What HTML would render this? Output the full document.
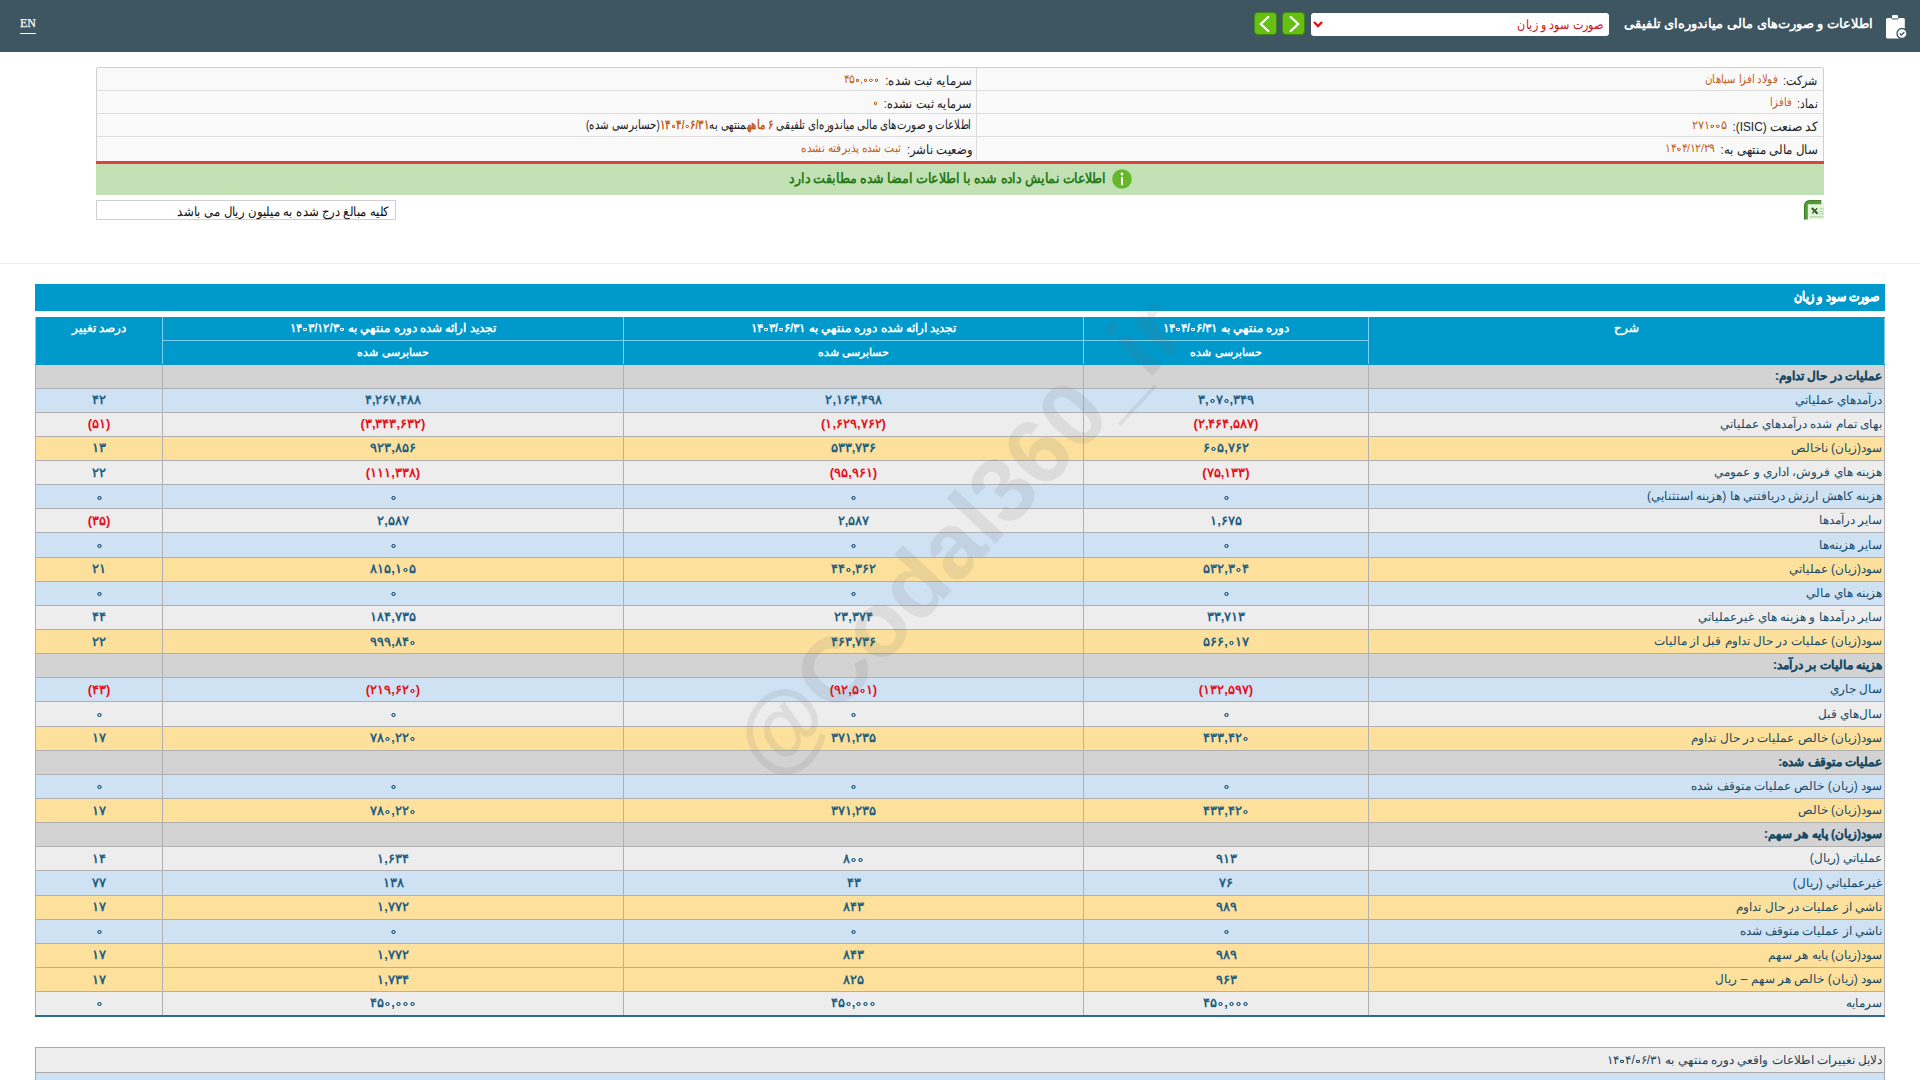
<!DOCTYPE html>
<html lang="fa">
<head>
<meta charset="utf-8">
<title>صورت سود و زیان</title>
<style>
*{box-sizing:border-box;margin:0;padding:0}
html,body{width:1920px;height:1080px;overflow:hidden;background:#fff;font-family:"Liberation Sans",sans-serif;color:#222}
.abs{position:absolute}
#hdr{position:absolute;left:0;top:0;width:1920px;height:52px;background:#3e5562}
#en{position:absolute;left:19.8px;top:15px;font-family:"Liberation Serif",serif;font-size:13px;font-weight:normal;color:#fff;line-height:16px;transform-origin:0 50%;transform:scaleX(0.92);-webkit-text-stroke:0.25px #fff}
#enline{position:absolute;left:20px;top:33px;width:16px;height:1px;background:#fff}
#ttl{position:absolute;right:47px;top:14px;font-size:13.3px;font-weight:bold;color:#fff;direction:rtl;white-space:nowrap;line-height:20px}
#sel{position:absolute;left:1311px;top:13px;width:298px;height:23px;background:#fff;border-radius:3px}
#seltxt{position:absolute;right:5.5px;top:3px;font-size:13px;transform-origin:100% 50%;transform:scaleX(0.86);color:#d0121b;direction:rtl;white-space:nowrap;line-height:17px}
.gbtn{position:absolute;top:12px;width:23px;height:23px;background:#66bf12;border-radius:4px;border:1px solid #3f8a10}
#info{position:absolute;left:96px;top:67px;width:1728px;height:94px;background:#f9f9f9;border:1px solid #cfcfcf;border-bottom:none;border-radius:3px 3px 0 0}
.irow{position:absolute;left:0;width:1726px;height:23px;border-top:1px solid #dcdcdc}
.icell{position:absolute;top:-0.5px;height:23px;direction:rtl;white-space:nowrap;font-size:12.5px;line-height:22px;padding-right:6px}
.ic1{left:880px;width:846px;padding-right:5.3px}
.ic2{left:0;width:880px;border-right:1px solid #dcdcdc;padding-right:4px}
.v{color:#c0601a;font-size:11.5px;vertical-align:2px}
.w{display:inline-block;transform-origin:100% 50%}
.l{margin-left:3px}
#redl{position:absolute;left:96px;top:161px;width:1728px;height:3px;background:#e2413f}
#green{position:absolute;left:96px;top:164px;width:1728px;height:31px;background:#c2e1b5}
#gtxt{position:absolute;right:718.4px;top:4px;text-align:right;direction:rtl;font-size:14px;font-weight:bold;color:#287a16;line-height:20px;white-space:nowrap}
#note{position:absolute;left:96px;top:200px;width:300px;height:20px;border:1px solid #cfcfcf;direction:rtl;font-size:13px;line-height:18px;padding-right:6px;padding-top:1.5px;white-space:nowrap;color:#111}
#sep{position:absolute;left:0;top:263px;width:1920px;height:1px;background:#ececec}
#tbar{position:absolute;left:35px;top:284px;width:1850px;height:27px;background:#0099cb;direction:rtl;color:#fff;font-weight:bold;font-size:13px;-webkit-text-stroke:0.4px #fff;line-height:25.5px;padding-right:5px;white-space:nowrap}
#tbl{position:absolute;left:35px;top:316.5px;width:1849px;border-collapse:collapse;table-layout:fixed;direction:rtl}
#tbl td,#tbl th{border:1px solid #b0b0b0;text-align:center;font-size:13px;font-weight:bold;color:#235e80;white-space:nowrap;overflow:hidden;padding:0}
#tbl thead th{background:#0099cb;color:#fff;border-color:#7fd0ee;height:23.5px;font-weight:bold;font-size:12px;vertical-align:middle}
#tbl thead tr+tr th{font-size:11.2px}
#tbl thead tr:first-child th{border-top-color:#0099cb}
#tbl thead tr+tr th,#tbl thead th[rowspan]{border-bottom-color:#0099cb}
#tbl thead th.top{vertical-align:top;padding-top:3px}
#tbl thead tr:first-child th{padding-bottom:2px}
#tbl tbody tr{height:24.15px}
#tbl tbody td{padding-bottom:1px}
#tbl tbody td.d{text-align:right;padding-right:2px;color:#174a66;font-size:12px;font-weight:normal}
#tbl tr.h td{background:#d3d3d3}
#tbl tr.h td.d{font-weight:bold;-webkit-text-stroke:0.2px #174a66}
#tbl tr.b td{background:#cfe2f4}
#tbl tr.g td{background:#ededed}
#tbl tr.y td{background:#fde09c}
#tbl td.r{color:#e3131b}
#tbl tbody tr:last-child td{border-bottom:2px solid #2d6a96}
#t2{position:absolute;left:35px;top:1047px;width:1850px;height:40px;border:1px solid #aaa;border-bottom:none}
#t2a{position:absolute;left:0;top:0;width:1848px;height:24px;background:#ededed;direction:rtl;font-size:12px;line-height:24px;padding-right:1.5px;color:#1c3f57;white-space:nowrap}
#t2b{position:absolute;left:0;top:24px;width:1848px;height:20px;background:#cfe2f4;border-top:1px solid #aaa}
.z{color:transparent;--zc:#235e80;background:radial-gradient(0.185em 0.16em at 50% 60%,transparent 30%,var(--zc) 52%,var(--zc) 78%,transparent 100%)}
td.r .z{--zc:#e3131b}
.v .z{--zc:#c0601a}
#tbl thead .z{--zc:#fff}
#t2a .z{--zc:#1c3f57}
#wm{position:absolute;left:958px;top:537px;transform:translate(-50%,-50%) rotate(-47deg);font-size:92px;font-weight:bold;color:rgba(110,110,110,0.13);line-height:100px;white-space:nowrap;pointer-events:none;font-family:"Liberation Sans",sans-serif}
</style>
</head>
<body>
<div id="hdr">
  <div id="en">EN</div><div id="enline"></div>
  <div class="gbtn" style="left:1254px"><svg width="21" height="21" viewBox="0 0 21 21" style="position:absolute;left:0;top:0"><path d="M13.3 4 L5.8 11 L13.3 18" fill="none" stroke="#fff" stroke-width="2.3" stroke-linecap="round"/></svg></div>
  <div class="gbtn" style="left:1282px"><svg width="21" height="21" viewBox="0 0 21 21" style="position:absolute;left:0;top:0"><path d="M7.7 4 L15.2 11 L7.7 18" fill="none" stroke="#fff" stroke-width="2.3" stroke-linecap="round"/></svg></div>
  <div id="sel"><svg width="10" height="8" viewBox="0 0 10 8" style="position:absolute;left:2.3px;top:6.8px"><path d="M1 2 L5 6 L9 2" fill="none" stroke="#e01010" stroke-width="2.4"/></svg><div id="seltxt">صورت سود و زیان</div></div>
  <div id="ttl">اطلاعات و صورت‌های مالی میاندوره‌ای تلفیقی</div>
  <svg width="24" height="26" viewBox="0 0 24 26" style="position:absolute;left:1884px;top:13px">
    <rect x="2" y="5" width="18.8" height="20.5" rx="1.5" fill="#fff"/>
    <rect x="7.5" y="1.5" width="7" height="4.5" rx="1.5" fill="#fff" stroke="#3e5562" stroke-width="1"/>
    <circle cx="18" cy="20.5" r="5" fill="#fff" stroke="#3e5562" stroke-width="1.3"/>
    <path d="M15.7 20.6 L17.4 22.1 L20.3 19.2" fill="none" stroke="#3e5562" stroke-width="1.4"/>
  </svg>
</div>

<div id="info">
  <div class="irow" style="top:0;border-top:none">
    <div class="icell ic1"><span class="w" style="transform:scaleX(0.8458)"><span class="l">شرکت:</span> <span class="v">فولاد افزا سپاهان</span></span></div>
    <div class="icell ic2"><span class="w" style="transform:scaleX(0.9021)"><span class="l">سرمایه ثبت شده:</span> <span class="v">۴۵<span class="z">۰</span>,<span class="z">۰</span><span class="z">۰</span><span class="z">۰</span></span></span></div>
  </div>
  <div class="irow" style="top:22px">
    <div class="icell ic1"><span class="w" style="transform:scaleX(0.8194)"><span class="l">نماد:</span> <span class="v">فافزا</span></span></div>
    <div class="icell ic2"><span class="w" style="transform:scaleX(0.8691)"><span class="l">سرمایه ثبت نشده:</span> <span class="v"><span class="z">۰</span></span></span></div>
  </div>
  <div class="irow" style="top:45px">
    <div class="icell ic1"><span class="w" style="transform:scaleX(0.9446)"><span class="l">کد صنعت (ISIC):</span> <span class="v">۲۷۱<span class="z">۰</span><span class="z">۰</span>۵</span></span></div>
    <div class="icell ic2"><span class="w" style="transform:scaleX(0.7858)">اطلاعات و صورت‌های مالی میاندوره‌ای تلفیقی <span class="v" style="vertical-align:0;font-weight:bold;font-size:12.5px">۶ ماهه</span>منتهی به<span class="v" style="vertical-align:0;font-weight:bold;font-size:12.5px">۱۴<span class="z">۰</span>۴/<span class="z">۰</span>۶/۳۱</span>(حسابرسی شده)</span></div>
  </div>
  <div class="irow" style="top:68px">
    <div class="icell ic1"><span class="w" style="transform:scaleX(0.9089)"><span class="l">سال مالی منتهی به:</span> <span class="v">۱۴<span class="z">۰</span>۴/۱۲/۲۹</span></span></div>
    <div class="icell ic2"><span class="w" style="transform:scaleX(0.893)"><span class="l">وضعیت ناشر:</span> <span class="v">ثبت شده پذیرفته نشده</span></span></div>
  </div>
</div>
<div id="redl"></div>
<div id="green"><svg width="20" height="20" viewBox="0 0 20 20" style="position:absolute;left:1015.5px;top:4.8px"><circle cx="10" cy="10" r="9.8" fill="#66b82a"/><circle cx="10" cy="5" r="1.4" fill="#fff"/><rect x="9" y="7.8" width="2" height="8.5" rx="0.5" fill="#fff"/></svg><div id="gtxt"><span class="w" style="transform:scaleX(0.9025)">اطلاعات نمایش داده شده با اطلاعات امضا شده مطابقت دارد</span></div></div>
<div id="note"><span class="w" style="transform:scaleX(0.9)">کلیه مبالغ درج شده به میلیون ریال می باشد</span></div>
<svg width="20" height="20" viewBox="0 0 20 20" style="position:absolute;left:1804px;top:200px">
  <rect x="3" y="3" width="17" height="16.5" fill="#e4f5da"/>
  <path d="M0.5 19.6 V6 Q0.5 0.6 6 0.6 H17.3 V4.2 H3.8 V19.6 Z" fill="#519c37"/>
  <path d="M0.5 19.6 V6 Q0.5 0.6 6 0.6 H17.3" fill="none" stroke="#3a7a26" stroke-width="1"/>
  <path d="M7.8 8 L13.6 13.8" stroke="#2b5a20" stroke-width="2.1"/>
  <path d="M13.2 8.2 L8.2 13.6" stroke="#3b6c2c" stroke-width="1.5"/>
  <path d="M15.5 8.8 H19.5 M15.5 11.3 H19.5 M15.5 13.8 H19.5 M6 16.8 H19.5" stroke="#a9cc98" stroke-width="0.9"/>
</svg>
<div id="sep"></div>

<div id="tbar"><span class="w" style="transform:scaleX(0.853)">صورت سود و زیان</span></div>
<table id="tbl">
<colgroup><col style="width:516px"><col style="width:285px"><col style="width:460px"><col style="width:461px"><col style="width:127px"></colgroup>
<thead>
<tr><th rowspan="2" class="top">شرح</th><th>دوره منتهي به ۱۴<span class="z">۰</span>۴/<span class="z">۰</span>۶/۳۱</th><th>تجديد ارائه شده دوره منتهي به ۱۴<span class="z">۰</span>۳/<span class="z">۰</span>۶/۳۱</th><th>تجديد ارائه شده دوره منتهي به ۱۴<span class="z">۰</span>۳/۱۲/۳<span class="z">۰</span></th><th rowspan="2" class="top">درصد تغيير</th></tr>
<tr><th>حسابرسی شده</th><th>حسابرسی شده</th><th>حسابرسی شده</th></tr>
</thead>
<tbody>
<tr class="h"><td class="d">عمليات در حال تداوم:</td><td></td><td></td><td></td><td></td></tr>
<tr class="b"><td class="d">درآمدهاي عملياتي</td><td>۳,<span class="z">۰</span>۷<span class="z">۰</span>,۳۴۹</td><td>۲,۱۶۳,۴۹۸</td><td>۴,۲۶۷,۴۸۸</td><td>۴۲</td></tr>
<tr class="g"><td class="d">بهای تمام شده درآمدهاي عملياتي</td><td class="r">(۲,۴۶۴,۵۸۷)</td><td class="r">(۱,۶۲۹,۷۶۲)</td><td class="r">(۳,۳۴۳,۶۳۲)</td><td class="r">(۵۱)</td></tr>
<tr class="y"><td class="d">سود(زيان) ناخالص</td><td>۶<span class="z">۰</span>۵,۷۶۲</td><td>۵۳۳,۷۳۶</td><td>۹۲۳,۸۵۶</td><td>۱۳</td></tr>
<tr class="g"><td class="d">هزينه هاي فروش، اداري و عمومي</td><td class="r">(۷۵,۱۳۳)</td><td class="r">(۹۵,۹۶۱)</td><td class="r">(۱۱۱,۳۳۸)</td><td>۲۲</td></tr>
<tr class="b"><td class="d">هزينه کاهش ارزش دريافتني ها (هزينه استثنايي)</td><td><span class="z">۰</span></td><td><span class="z">۰</span></td><td><span class="z">۰</span></td><td><span class="z">۰</span></td></tr>
<tr class="g"><td class="d">ساير درآمدها</td><td>۱,۶۷۵</td><td>۲,۵۸۷</td><td>۲,۵۸۷</td><td class="r">(۳۵)</td></tr>
<tr class="b"><td class="d">ساير هزينه‌ها</td><td><span class="z">۰</span></td><td><span class="z">۰</span></td><td><span class="z">۰</span></td><td><span class="z">۰</span></td></tr>
<tr class="y"><td class="d">سود(زيان) عملياتي</td><td>۵۳۲,۳<span class="z">۰</span>۴</td><td>۴۴<span class="z">۰</span>,۳۶۲</td><td>۸۱۵,۱<span class="z">۰</span>۵</td><td>۲۱</td></tr>
<tr class="b"><td class="d">هزينه هاي مالي</td><td><span class="z">۰</span></td><td><span class="z">۰</span></td><td><span class="z">۰</span></td><td><span class="z">۰</span></td></tr>
<tr class="g"><td class="d">ساير درآمدها و هزينه هاي غيرعملياتي</td><td>۳۳,۷۱۳</td><td>۲۳,۳۷۴</td><td>۱۸۴,۷۳۵</td><td>۴۴</td></tr>
<tr class="y"><td class="d">سود(زيان) عمليات در حال تداوم قبل از ماليات</td><td>۵۶۶,<span class="z">۰</span>۱۷</td><td>۴۶۳,۷۳۶</td><td>۹۹۹,۸۴<span class="z">۰</span></td><td>۲۲</td></tr>
<tr class="h"><td class="d">هزينه ماليات بر درآمد:</td><td></td><td></td><td></td><td></td></tr>
<tr class="b"><td class="d">سال جاري</td><td class="r">(۱۳۲,۵۹۷)</td><td class="r">(۹۲,۵<span class="z">۰</span>۱)</td><td class="r">(۲۱۹,۶۲<span class="z">۰</span>)</td><td class="r">(۴۳)</td></tr>
<tr class="g"><td class="d">سال‌هاي قبل</td><td><span class="z">۰</span></td><td><span class="z">۰</span></td><td><span class="z">۰</span></td><td><span class="z">۰</span></td></tr>
<tr class="y"><td class="d">سود(زيان) خالص عمليات در حال تداوم</td><td>۴۳۳,۴۲<span class="z">۰</span></td><td>۳۷۱,۲۳۵</td><td>۷۸<span class="z">۰</span>,۲۲<span class="z">۰</span></td><td>۱۷</td></tr>
<tr class="h"><td class="d">عمليات متوقف شده:</td><td></td><td></td><td></td><td></td></tr>
<tr class="b"><td class="d">سود (زيان) خالص عمليات متوقف شده</td><td><span class="z">۰</span></td><td><span class="z">۰</span></td><td><span class="z">۰</span></td><td><span class="z">۰</span></td></tr>
<tr class="y"><td class="d">سود(زيان) خالص</td><td>۴۳۳,۴۲<span class="z">۰</span></td><td>۳۷۱,۲۳۵</td><td>۷۸<span class="z">۰</span>,۲۲<span class="z">۰</span></td><td>۱۷</td></tr>
<tr class="h"><td class="d">سود(زيان) پايه هر سهم:</td><td></td><td></td><td></td><td></td></tr>
<tr class="g"><td class="d">عملياتي (ريال)</td><td>۹۱۳</td><td>۸<span class="z">۰</span><span class="z">۰</span></td><td>۱,۶۳۴</td><td>۱۴</td></tr>
<tr class="b"><td class="d">غيرعملياتي (ريال)</td><td>۷۶</td><td>۴۳</td><td>۱۳۸</td><td>۷۷</td></tr>
<tr class="y"><td class="d">ناشي از عمليات در حال تداوم</td><td>۹۸۹</td><td>۸۴۳</td><td>۱,۷۷۲</td><td>۱۷</td></tr>
<tr class="b"><td class="d">ناشي از عمليات متوقف شده</td><td><span class="z">۰</span></td><td><span class="z">۰</span></td><td><span class="z">۰</span></td><td><span class="z">۰</span></td></tr>
<tr class="y"><td class="d">سود(زيان) پايه هر سهم</td><td>۹۸۹</td><td>۸۴۳</td><td>۱,۷۷۲</td><td>۱۷</td></tr>
<tr class="y"><td class="d">سود (زيان) خالص هر سهم – ريال</td><td>۹۶۳</td><td>۸۲۵</td><td>۱,۷۳۴</td><td>۱۷</td></tr>
<tr class="g"><td class="d">سرمايه</td><td>۴۵<span class="z">۰</span>,<span class="z">۰</span><span class="z">۰</span><span class="z">۰</span></td><td>۴۵<span class="z">۰</span>,<span class="z">۰</span><span class="z">۰</span><span class="z">۰</span></td><td>۴۵<span class="z">۰</span>,<span class="z">۰</span><span class="z">۰</span><span class="z">۰</span></td><td><span class="z">۰</span></td></tr>
</tbody>
</table>
<div id="t2"><div id="t2a">دلايل تغييرات اطلاعات واقعي دوره منتهي به ۱۴<span class="z">۰</span>۴/<span class="z">۰</span>۶/۳۱</div><div id="t2b"></div></div>
<div id="wm">@Codal360_ir</div>
</body>
</html>
